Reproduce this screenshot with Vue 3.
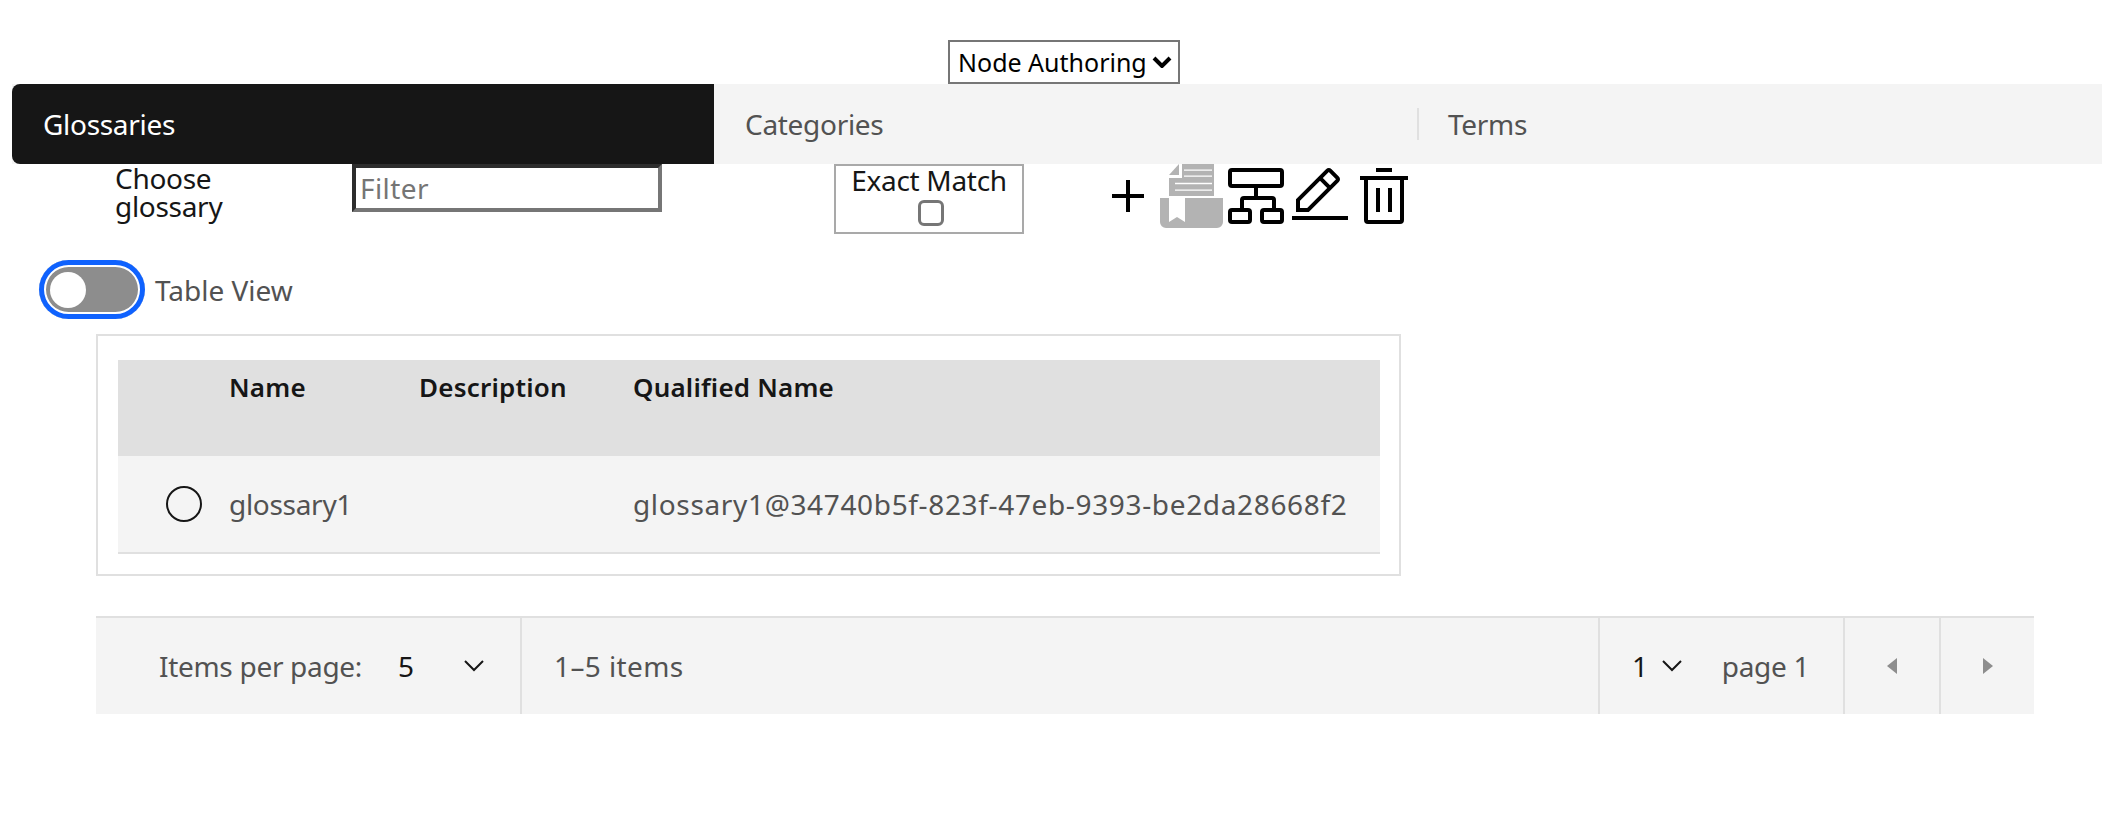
<script setup>
import { ref } from 'vue'

const tabs = ['Glossaries', 'Categories', 'Terms']
const columns = ['Name', 'Description', 'Qualified Name']
const rows = ref([
  { name: 'glossary1', description: '', qualifiedName: 'glossary1@34740b5f-823f-47eb-9393-be2da28668f2' }
])
</script>

<template>
  <div class="page">
    <div class="top">
      <div class="mode-wrap">
        <select class="mode">
          <option>Node Authoring</option>
        </select>
        <svg class="mode-arrow" viewBox="0 0 20 12"><path d="M2 2l8 8 8-8" /></svg>
      </div>
    </div>

    <div class="tabs">
      <div v-for="(tab, i) in tabs" :key="tab" class="tab" :class="{ active: i === 0, divided: i === 2 }">{{ tab }}</div>
    </div>

    <div class="controls">
      <label class="choose">Choose glossary</label>
      <input class="filter" placeholder="Filter" />
      <div class="exact">
        <span>Exact Match</span>
        <input class="check" type="checkbox" />
      </div>
      <div class="icons">
        <svg viewBox="0 0 32 32"><path d="M17 15V8h-2v7H8v2h7v7h2v-7h7v-2z" /></svg>
        <svg viewBox="0 0 32 32" class="disabled">
          <path d="M9.500 0v5.500h-5z" />
          <path fill-rule="evenodd" d="M11 0h16v16H4.500V7H11z M12 2.700v.7h14v-.7z M12 5.700v.7h14v-.7z M7.500 9.400v.7H26v-.7z M7.500 12.700v.7H26v-.7z" />
          <path d="M0 17h4.500v12l4-2.500 4 2.500V17h19v12a3 3 0 0 1-3 3H3a3 3 0 0 1-3-3z" />
        </svg>
        <svg viewBox="0 0 32 32">
          <path d="M4 2h24a2 2 0 0 1 2 2v6a2 2 0 0 1-2 2h-11v4h7a2 2 0 0 1 2 2v4h2a2 2 0 0 1 2 2v4a2 2 0 0 1-2 2h-8a2 2 0 0 1-2-2v-4a2 2 0 0 1 2-2h4v-4H10v4h2a2 2 0 0 1 2 2v4a2 2 0 0 1-2 2H4a2 2 0 0 1-2-2v-4a2 2 0 0 1 2-2h4v-4a2 2 0 0 1 2-2h5v-4H4a2 2 0 0 1-2-2V4a2 2 0 0 1 2-2zm0 2v6h24V4zm0 20v4h8v-4zm16 0v4h8v-4z" fill-rule="evenodd" />
        </svg>
        <svg viewBox="0 0 32 32">
          <path d="M2 26h28v2H2z M25.400 9c.8-.8.8-2 0-2.800l-3.600-3.600c-.8-.8-2-.8-2.800 0l-15 15V24h6.400l15-15zm-5-5L24 7.600l-3 3L17.400 7l3-3zM6 22v-3.600l10-10 3.600 3.600-10 10H6z" />
        </svg>
        <svg viewBox="0 0 32 32">
          <path d="M12 12h2v12h-2zM18 12h2v12h-2z M4 6v2h2v20a2 2 0 0 0 2 2h16a2 2 0 0 0 2-2V8h2V6zm4 22V8h16v20z M12 2h8v2h-8z" />
        </svg>
      </div>
    </div>

    <div class="toggle-row">
      <span class="toggle"><span class="knob"></span></span>
      <span class="toggle-label">Table View</span>
    </div>

    <div class="table-box">
      <table>
        <thead>
          <tr>
            <th class="select-col"></th>
            <th v-for="c in columns" :key="c">{{ c }}</th>
          </tr>
        </thead>
        <tbody>
          <tr v-for="row in rows" :key="row.name">
            <td class="select-col"><span class="radio"></span></td>
            <td>{{ row.name }}</td>
            <td>{{ row.description }}</td>
            <td class="qname">{{ row.qualifiedName }}</td>
          </tr>
        </tbody>
      </table>
    </div>

    <div class="pagination">
      <div class="left">
        <span class="muted">Items per page:</span>
        <span class="value size">5</span>
        <svg class="chev" viewBox="0 0 20 12"><path d="M1 1l9 9 9-9" /></svg>
      </div>
      <div class="range muted">1–5 items</div>
      <div class="pages">
        <span class="value">1</span>
        <svg class="chev small" viewBox="0 0 20 12"><path d="M1 1l9 9 9-9" /></svg>
        <span class="muted">page 1</span>
      </div>
      <div class="arrow"><svg viewBox="0 0 10 16"><path d="M10 0v16L0 8z" /></svg></div>
      <div class="arrow"><svg viewBox="0 0 10 16"><path d="M0 0v16l10-8z" /></svg></div>
    </div>
  </div>
</template>

<style>
body {
  margin: 0;
  background: #fff;
}
</style>

<style scoped>
.page {
  width: 2102px;
  height: 832px;
  overflow: hidden;
  font-family: "Noto Sans", "Open Sans", sans-serif;
  font-size: 28px;
  letter-spacing: -.3px;
  color: #161616;
}

.top {
  display: flex;
  padding: 40px 0 0 948px;
  height: 44px;
}

.mode-wrap {
  position: relative;
  width: 232px;
  height: 44px;
}

.mode {
  appearance: none;
  width: 100%;
  height: 100%;
  padding: 0 0 0 8px;
  font: inherit;
  font-size: 25px;
  color: #000;
  background: #fff;
  border: 2px solid #767676;
  border-radius: 0;
  box-sizing: border-box;
}

.mode-arrow {
  position: absolute;
  left: 204px;
  top: 16px;
  width: 20px;
  height: 12px;
  fill: none;
  stroke: #000;
  stroke-width: 4;
}

.tabs {
  display: grid;
  grid-template-columns: 702px 703px 685px;
  margin-left: 12px;
  height: 80px;
  background: #f4f4f4;
}

.tab {
  display: flex;
  align-items: center;
  padding-left: 31px;
  color: #525252;
  position: relative;
}

.tab.active {
  background: #161616;
  color: #fff;
  border-radius: 8px 0 0 8px;
}

.tab.divided::before {
  content: "";
  position: absolute;
  left: 0;
  top: 24px;
  bottom: 24px;
  width: 2px;
  background: #e0e0e0;
}

.controls {
  display: flex;
  height: 96px;
  padding-left: 115px;
}

.choose {
  width: 237px;
  padding-right: 100px;
  box-sizing: border-box;
  line-height: 28px;
}

.filter {
  width: 310px;
  height: 48px;
  padding: 0 4px;
  box-sizing: border-box;
  font: inherit;
  letter-spacing: .4px;
  border-style: solid;
  border-width: 4px;
  border-color: #2d2d2d #767676 #767676 #2d2d2d;
  border-radius: 0;
  outline: none;
}

.filter::placeholder {
  color: #757575;
}

.exact {
  display: flex;
  flex-direction: column;
  align-items: center;
  width: 190px;
  height: 70px;
  margin-left: 172px;
  box-sizing: border-box;
  border: 2px solid #a9a9a9;
  line-height: 28px;
}

.check {
  appearance: none;
  width: 26px;
  height: 26px;
  margin: 6px 0 0 4px;
  background: #fff;
  border: 3px solid #767676;
  border-radius: 6px;
  box-sizing: border-box;
}

.icons {
  display: flex;
  margin-left: 72px;
}

.icons svg {
  width: 64px;
  height: 64px;
  flex: none;
  fill: #000;
}

.icons svg.disabled {
  fill: #b3b3b3;
}

.toggle-row {
  display: flex;
  align-items: center;
  padding-left: 39px;
  height: 59px;
}

.toggle {
  position: relative;
  width: 106px;
  height: 59px;
  border-radius: 30px;
  background: #8d8d8d;
  box-shadow: inset 0 0 0 5px #0f62fe, inset 0 0 0 7px #fff;
}

.knob {
  position: absolute;
  left: 11px;
  top: 12px;
  width: 36px;
  height: 36px;
  border-radius: 50%;
  background: #fff;
}

.toggle-label {
  margin-left: 10px;
  letter-spacing: 0;
  color: #525252;
}

.table-box {
  width: 1305px;
  height: 242px;
  margin: 15px 0 0 96px;
  padding: 24px 19px 0 20px;
  box-sizing: border-box;
  border: 2px solid #e0e0e0;
}

table {
  width: 100%;
  border-collapse: collapse;
  table-layout: fixed;
}

th {
  height: 96px;
  padding: 9px 0 0;
  box-sizing: border-box;
  background: #e0e0e0;
  text-align: left;
  vertical-align: top;
  font-size: 26px;
  letter-spacing: .2px;
  font-weight: 600;
}

th:nth-child(2), td:nth-child(2) { width: 190px; }
th:nth-child(3), td:nth-child(3) { width: 214px; }

td {
  height: 96px;
  padding: 0;
  background: #f4f4f4;
  border-bottom: 2px solid #e0e0e0;
  color: #525252;
  white-space: nowrap;
}

td.qname {
  letter-spacing: .65px;
}

.select-col {
  width: 111px;
}

.radio {
  display: block;
  width: 36px;
  height: 36px;
  margin-left: 48px;
  box-sizing: border-box;
  border: 2px solid #161616;
  border-radius: 50%;
}

.pagination {
  display: flex;
  width: 1938px;
  height: 98px;
  margin: 40px 0 0 96px;
  box-sizing: border-box;
  background: #f4f4f4;
  border-top: 2px solid #e0e0e0;
}

.left {
  display: flex;
  align-items: center;
  width: 426px;
  padding-left: 63px;
  box-sizing: border-box;
  border-right: 2px solid #e0e0e0;
}

.muted {
  color: #525252;
}

.size {
  margin-left: 36px;
}

.chev {
  width: 20px;
  height: 12px;
  margin-left: 50px;
  fill: none;
  stroke: #161616;
  stroke-width: 2;
}

.chev.small {
  margin: 0 40px 0 14px;
}

.range {
  flex: 1;
  display: flex;
  align-items: center;
  padding-left: 32px;
  letter-spacing: .4px;
}

.pages {
  display: flex;
  align-items: center;
  width: 245px;
  padding-left: 32px;
  box-sizing: border-box;
  border-left: 2px solid #e0e0e0;
}

.arrow {
  display: flex;
  align-items: center;
  justify-content: center;
  width: 96px;
  box-sizing: border-box;
  border-left: 2px solid #e0e0e0;
}

.arrow:last-child {
  width: 95px;
}

.arrow svg {
  width: 10px;
  height: 16px;
  fill: #8d8d8d;
}
</style>
